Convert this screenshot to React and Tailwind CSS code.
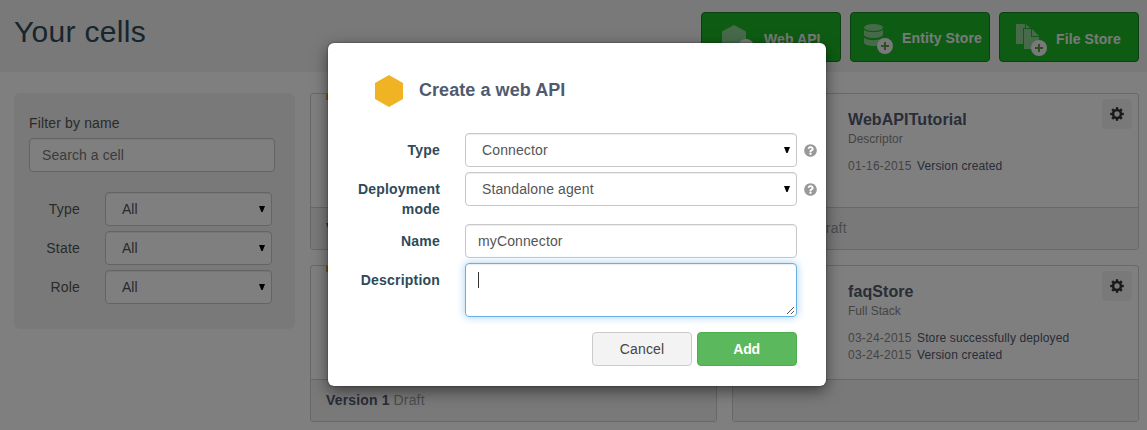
import React from "react";
import { FaQuestionCircle } from "react-icons/fa";

const cx = (...a) => a.filter(Boolean).join(" ");

function Plus({ x, y }) {
  return (
    <g>
      <circle cx={x} cy={y} r="8" fill="#f2f2f2" />
      <path d={`M${x - 4} ${y}h8M${x} ${y - 4}v8`} stroke="#5f9f45" strokeWidth="2" />
    </g>
  );
}

function HexIcon() {
  return (
    <svg width="36" height="36" viewBox="0 0 36 36" className="block shrink-0">
      <path d="M16 2l12 6.500v15l-12 6.500l-12-6.500v-15z" fill="#8fd594" />
      <Plus x={28} y={24} />
    </svg>
  );
}

function DatabaseIcon() {
  return (
    <svg width="36" height="36" viewBox="0 0 36 36" className="block shrink-0">
      <g fill="#8fd594">
        <ellipse cx="14.500" cy="4.500" rx="9.500" ry="3.500" />
        <path d="M5 6.500c2 3.500 17 3.500 19 0v5.500c-2 4-17 4-19 0z" />
        <path d="M5 14.500c2 3.500 17 3.500 19 0v5.500c-2 4-17 4-19 0z" />
      </g>
      <Plus x={26} y={23} />
    </svg>
  );
}

function FilesIcon() {
  return (
    <svg width="36" height="36" viewBox="0 0 36 36" className="block shrink-0">
      <g fill="#8fd594">
        <path d="M4 1h9v4h-2v16h-7zM14 1l4 4h-4z" />
        <path d="M12 6h7v8h8v12h-15zM20 6l7 7h-7z" />
      </g>
      <Plus x={27} y={25} />
    </svg>
  );
}

function Gear() {
  return (
    <svg width="14" height="14" viewBox="-7 -7 14 14" className="block">
      <circle r="3.900" fill="none" stroke="#333" strokeWidth="2.500" />
      {[0, 45, 90, 135, 180, 225, 270, 315].map((a) => (
        <rect key={a} x="-1.200" y="-6.800" width="2.400" height="2.600" fill="#333" transform={`rotate(${a})`} />
      ))}
    </svg>
  );
}

function Caret() {
  return (
    <svg width="6" height="6" viewBox="0 0 6 6" className="mb-px block shrink-0">
      <path d="M0 0h6l-2.400 6h-1.200z" fill="#000" />
    </svg>
  );
}

const field = "flex h-[34px] items-center rounded border border-[#c8c8c8] bg-white text-[#555] shadow-[inset_0_1px_1px_rgba(0,0,0,0.075)]";

function Select({ value, className }) {
  return (
    <div className={cx(field, "justify-between pl-4 pr-1.5", className)}>
      <span>{value}</span>
      <Caret />
    </div>
  );
}

function StoreButton({ icon, label, className, textClass }) {
  return (
    <button className={cx("flex h-[50px] w-[140px] items-start rounded border border-[#168020] bg-[#1cb827] pt-[10px] text-[14px] font-bold text-[#f2f2f2]", className)}>
      {icon}
      <span className={cx("whitespace-nowrap leading-5", textClass)}>{label}</span>
    </button>
  );
}

function Filter({ label }) {
  return (
    <div className="flex items-center">
      <span className="w-[51px] text-right tracking-[0.200px]">{label}</span>
      <Select value="All" className="ml-[25px] w-[167px]" />
    </div>
  );
}

function Cell({ name, kind, events = [], version, status, accent }) {
  return (
    <article className="flex h-[157px] flex-col overflow-hidden rounded-[3px] border border-[#d0d0d0] bg-white">
      <div className="flex h-[113px] justify-between pl-[15px] pr-[6px]">
        <div className={cx("h-[6px] w-[70px] shrink-0", accent)} />
        <div className="ml-[30px] flex-1 pt-[15px] text-[12px]">
          <h2 className="text-[16px] font-bold leading-[22px] tracking-[0.080px] text-[#505a6e]">{name}</h2>
          <p className="leading-[17px] text-[#888]">{kind}</p>
          <div className="pt-[10px]">
            {events.map(([date, text]) => (
              <p key={text} className="flex gap-[5px] leading-[17px]">
                <span className="w-[64px] tracking-[0.220px] text-[#888]">{date}</span>
                <span className="tracking-[0.130px] text-[#505a6e]">{text}</span>
              </p>
            ))}
          </div>
        </div>
        <button className="mt-[5px] flex size-[30px] items-center justify-center rounded bg-[#f3f3f3]">
          <Gear />
        </button>
      </div>
      <footer className="flex flex-1 items-center gap-1 border-t border-[#d0d0d0] bg-[#f3f3f3] pl-[15px] text-[14px] tracking-[0.150px]">
        <b className="text-[#505a6e]">{version}</b>
        <span className="text-[#999]">{status}</span>
      </footer>
    </article>
  );
}

function Row({ label, children, className, help }) {
  return (
    <div className={cx("flex", className)}>
      <label className="w-[112px] pt-[7px] text-right font-bold leading-5 tracking-[0.200px] text-[#2e4a59]">{label}</label>
      <div className="ml-[25px] w-[332px]">{children}</div>
      {help && <FaQuestionCircle className="ml-[7px] mt-[11px] size-[13px] text-[#999]" />}
    </div>
  );
}

function CreateDialog() {
  return (
    <div className="h-[343px] w-[498px] rounded-md bg-white text-[14px] tracking-[0.120px] shadow-[0_5px_15px_rgba(0,0,0,0.5),0_0_2px_rgba(0,0,0,0.5)]">
      <div className="flex h-[90px] items-center pl-[46px] pt-[5px]">
        <svg width="30" height="34" viewBox="0 0 30 34" className="block">
          <path d="M15 1l14 8v16l-14 8l-14-8v-16z" fill="#f0b323" />
        </svg>
        <h2 className="ml-[15px] text-[18px] font-bold tracking-[0.060px] text-[#505a6e]">Create a web API</h2>
      </div>
      <div className="flex flex-col gap-[5px]">
        <Row label="Type" help><Select value="Connector" /></Row>
        <Row label="Deployment mode" help><Select value="Standalone agent" /></Row>
        <Row label="Name"><div className={cx(field, "pl-3")}>myConnector</div></Row>
        <Row label="Description">
          <div className="flex h-[54px] items-start justify-between rounded border border-[#66afe9] pl-3 pt-2 shadow-[inset_0_1px_1px_rgba(0,0,0,0.075),0_0_8px_rgba(102,175,233,0.6)]">
            <span className="h-4 w-px bg-[#333]" />
            <svg width="9" height="9" viewBox="0 0 9 9" className="mb-px mr-px block self-end">
              <path d="M1 8l7-7M5 8l3-3" stroke="#555" strokeWidth="1" fill="none" />
            </svg>
          </div>
        </Row>
      </div>
      <div className="mt-[15px] flex justify-end gap-[5px] pr-[29px]">
        <button className="h-[34px] w-[100px] rounded border border-[#ccc] bg-[#f3f3f3] text-[#444]">Cancel</button>
        <button className="h-[34px] w-[100px] rounded border border-[#4cae4c] bg-[#5cb85c] pr-px font-bold tracking-[-0.300px] text-white">Add</button>
      </div>
    </div>
  );
}

export default function App() {
  return (
    <div className="relative h-[430px] w-[1147px] overflow-hidden bg-white font-['Liberation_Sans',Arial,sans-serif] text-[14px] text-[#555]">
      <header className="flex h-[72px] items-start justify-between bg-[#f3f3f3] pl-[14px] pr-2">
        <h1 className="pt-[14px] text-[30px] leading-9 tracking-[0.300px] text-[#2e4a59]">Your cells</h1>
        <div className="flex gap-[9px] pt-3">
          <StoreButton icon={<HexIcon />} label="Web API" className="pl-4" textClass="ml-[10px] mt-[6px] tracking-[0.080px]" />
          <StoreButton icon={<DatabaseIcon />} label="Entity Store" className="pl-2" textClass="ml-[7px] mt-[5px] tracking-[0.120px]" />
          <StoreButton icon={<FilesIcon />} label="File Store" className="pl-3" textClass="ml-2 mt-[6px] tracking-[0.100px]" />
        </div>
      </header>
      <main className="flex gap-[15px] pl-[14px] pr-2 pt-[21px]">
        <aside className="h-[236px] w-[281px] rounded-md bg-[#f3f3f3] px-[15px] pt-5">
          <p className="leading-5 tracking-[0.150px]">Filter by name</p>
          <div className={cx(field, "mt-[5px] w-[246px] pl-3 tracking-[0.080px] text-[#777]")}>Search a cell</div>
          <div className="mt-5 flex flex-col gap-[5px]">
            <Filter label="Type" />
            <Filter label="State" />
            <Filter label="Role" />
          </div>
        </aside>
        <section className="grid flex-1 grid-cols-[407px_407px] gap-[15px]">
          <Cell version="Version 1" status="Draft" accent="bg-[#f0b323]" />
          <Cell name="WebAPITutorial" kind="Descriptor" events={[["01-16-2015", "Version created"]]} version="Version 1" status="Draft" />
          <Cell version="Version 1" status="Draft" accent="bg-[#f0a323]" />
          <Cell name="faqStore" kind="Full Stack" events={[["03-24-2015", "Store successfully deployed"], ["03-24-2015", "Version created"]]} />
        </section>
      </main>
      <div className="absolute inset-0 flex items-start bg-black/50 pl-[328px] pt-[43px]">
        <CreateDialog />
      </div>
    </div>
  );
}
